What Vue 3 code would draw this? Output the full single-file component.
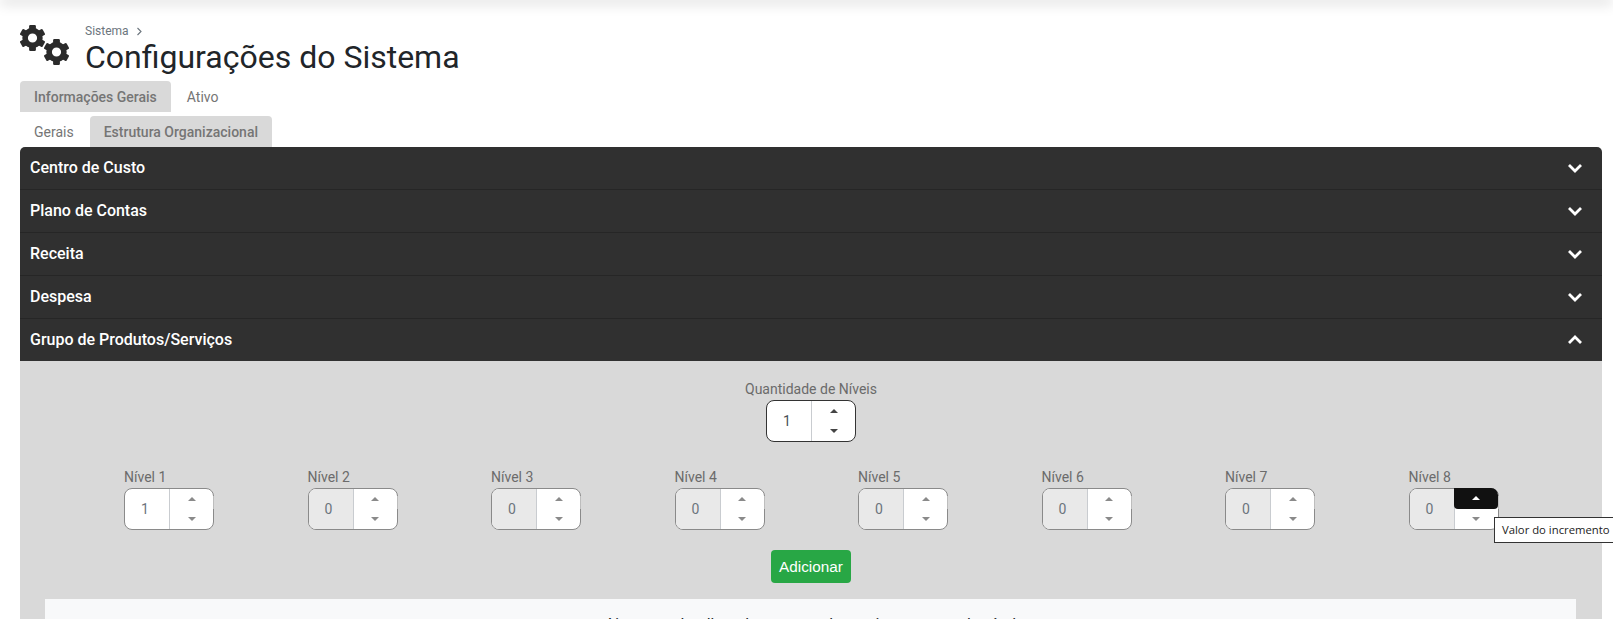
<script setup>
const sections = ['Centro de Custo', 'Plano de Contas', 'Receita', 'Despesa']
const levels = [1, 2, 3, 4, 5, 6, 7, 8]
const teeth = [0, 60, 120, 180, 240, 300]
</script>

<template>
  <div class="page">
    <div class="topbar"></div>
    <header class="head">
      <svg class="cogs" width="56" height="50" viewBox="0 0 56 50">
        <g v-for="c in [[12.5, 14], [36.5, 28]]" :key="c[0]" :transform="`translate(${c[0]} ${c[1]})`">
          <rect v-for="t in teeth" :key="t" x="-3.4" y="-13" width="6.8" height="7" rx="1.2" fill="#2b2b2b" :transform="`rotate(${t})`" />
          <circle r="7.4" fill="none" stroke="#2b2b2b" stroke-width="5.6" />
        </g>
      </svg>
      <div class="titles">
        <div class="crumb">Sistema <svg width="7" height="9" viewBox="0 0 7 9"><path d="M1.5 1l3.5 3.5L1.5 8" fill="none" stroke="#6c757d" stroke-width="1.1" /></svg></div>
        <h1>Configurações do Sistema</h1>
      </div>
    </header>

    <nav class="tabs first">
      <span class="tab on">Informações Gerais</span>
      <span class="tab">Ativo</span>
    </nav>
    <nav class="tabs second">
      <span class="tab">Gerais</span>
      <span class="tab on">Estrutura Organizacional</span>
    </nav>

    <section class="accordion">
      <div v-for="s in sections" :key="s" class="row">
        <span>{{ s }}</span>
        <svg width="16" height="10" viewBox="0 0 16 10"><path d="M2 2l6 6 6-6" fill="none" stroke="#fff" stroke-width="2.8" /></svg>
      </div>
      <div class="row last">
        <span>Grupo de Produtos/Serviços</span>
        <svg width="16" height="10" viewBox="0 0 16 10"><path d="M2 8l6-6 6 6" fill="none" stroke="#fff" stroke-width="2.8" /></svg>
      </div>

      <div class="body">
        <div class="qty">
          <label>Quantidade de Níveis</label>
          <div class="spin dark">
            <div class="val blue">1</div>
            <div class="btns">
              <div class="btn"><i class="up"></i></div>
              <div class="btn"><i class="down"></i></div>
            </div>
          </div>
        </div>

        <div class="levels">
          <div v-for="n in levels" :key="n" class="level">
            <label>Nível {{ n }}</label>
            <div class="spin">
              <div class="val" :class="{ off: n > 1 }">{{ n === 1 ? 1 : 0 }}</div>
              <div class="btns">
                <div class="btn top" :class="{ hot: n === 8 }"><i class="up"></i></div>
                <div class="btn"><i class="down"></i></div>
              </div>
            </div>
          </div>
        </div>

        <div class="action"><button type="button">Adicionar</button></div>

        <div class="strip">Ajuste os detalhes dos grupos de serviços para cada nível</div>
      </div>
    </section>

    <div class="tooltip">Valor do incremento</div>
  </div>
</template>

<style>
html, body { margin: 0; overflow: hidden; background: #fff; }
</style>

<style scoped>
.page {
  position: relative;
  width: 1613px;
  height: 619px;
  overflow: hidden;
  padding: 0 11px 0 20px;
  box-sizing: border-box;
  font-family: Roboto, sans-serif;
  color: #212529;
}
.topbar {
  position: absolute;
  left: 0;
  right: 0;
  top: -4px;
  height: 4px;
  box-shadow: 0 2px 14px rgba(0, 0, 0, .28);
}
.head {
  display: flex;
  height: 81px;
  box-sizing: border-box;
  padding-top: 24px;
}
.cogs { flex: none; }
.titles { margin-left: 9px; }
.crumb {
  font-size: 12px;
  line-height: 14px;
  color: #6c757d;
  display: flex;
  align-items: center;
  gap: 7px;
}
h1 {
  margin: 0;
  font-size: 32px;
  font-weight: 400;
  line-height: 38px;
  color: #212529;
}
.tabs { display: flex; height: 31px; }
.second { margin-top: 4px; }
.tab {
  padding: 0 14px;
  font-size: 14px;
  line-height: 32px;
  color: #757575;
  border-radius: 4px 4px 0 0;
}
.tab.on { background: #d9d9d9; font-weight: 500; color: #757575; }
.second .tab:first-child { padding-right: 16px; }
.first .tab.on { margin-right: 2px; }
.accordion {
  border-radius: 5px 5px 0 0;
  overflow: hidden;
}
.row {
  border-bottom: 1px solid #262626;
  background: #303030;
  color: #fff;
  font-size: 16px;
  font-weight: 500;
  line-height: 20px;
  display: flex;
  align-items: center;
  justify-content: space-between;
  padding: 1px 19px 1px 10px;
  height: 40px;
}
.row.last { border-bottom: 0; }
.body {
  background: #d9d9d9;
  height: 260px;
  padding-top: 20px;
  box-sizing: border-box;
  font-size: 14px;
  color: #6c757d;
}
label { display: block; line-height: 17px; color: #6b6b6b; white-space: nowrap; }
.qty {
  display: flex;
  flex-direction: column;
  align-items: center;
  gap: 2px;
}
.spin {
  position: relative;
  width: 90px;
  height: 42px;
  box-sizing: border-box;
  border: 1px solid #8a8a8a;
  border-radius: 8px;
  background: #fff;
  display: flex;
}
.spin:not(.dark)::after {
  content: "";
  position: absolute;
  right: -1px;
  top: 7px;
  width: 1px;
  height: 13px;
  background: #bdbdbd;
}
.spin.dark { border-color: #333; }
.val {
  width: 45px;
  flex: none;
  box-sizing: border-box;
  border-right: 1px solid #c9ccd0;
  border-radius: 7px 0 0 7px;
  padding-left: 16px;
  line-height: 40px;
  font-size: 14px;
  color: #6c757d;
}
.val.blue { color: #495057; }
.val.off { background: #e9e9e9; }
.btns { flex: 1; display: flex; flex-direction: column; }
.btn {
  flex: 1;
  display: flex;
  align-items: center;
  justify-content: center;
}
.btn i { width: 0; height: 0; border-left: 4.5px solid transparent; border-right: 4.5px solid transparent; }
.btn .up { border-bottom: 4px solid #8a8a8a; }
.btn .down { border-top: 4px solid #8a8a8a; }
.dark .btn .up { border-bottom-color: #444; }
.dark .btn .down { border-top-color: #444; }
.btn.hot { background: #111; border-radius: 0 7px 4px 4px; margin: -1px 0 0 -1px; position: relative; z-index: 1; }
.btn.hot .up { border-bottom-color: #fff; }
.levels {
  display: grid;
  grid-template-columns: repeat(8, 183.5px);
  margin-top: 27px;
  padding-left: 104px;
}
.level { display: flex; flex-direction: column; gap: 2px; align-items: flex-start; }
.action { display: flex; justify-content: center; margin-top: 20px; }
button {
  width: 80px;
  height: 33px;
  padding: 0;
  background: #28a745;
  color: #fff;
  border: 0;
  border-radius: 4px;
  font-family: "Liberation Sans", Arial, sans-serif;
  font-size: 15.3px;
}
.strip {
  margin: 16px 26px 0 25px;
  height: 60px;
  background: #f8f9fa;
  padding-top: 16px;
  box-sizing: border-box;
  text-align: center;
  font-size: 16px;
  color: #212529;
}
.tooltip {
  position: absolute;
  left: 1494px;
  top: 517px;
  width: 130px;
  height: 26px;
  box-sizing: border-box;
  border: 1px solid #333;
  background: #fff;
  padding-left: 7px;
  font-family: "Open Sans", sans-serif;
  font-size: 11.3px;
  line-height: 24px;
  color: #222;
  white-space: nowrap;
}
</style>
